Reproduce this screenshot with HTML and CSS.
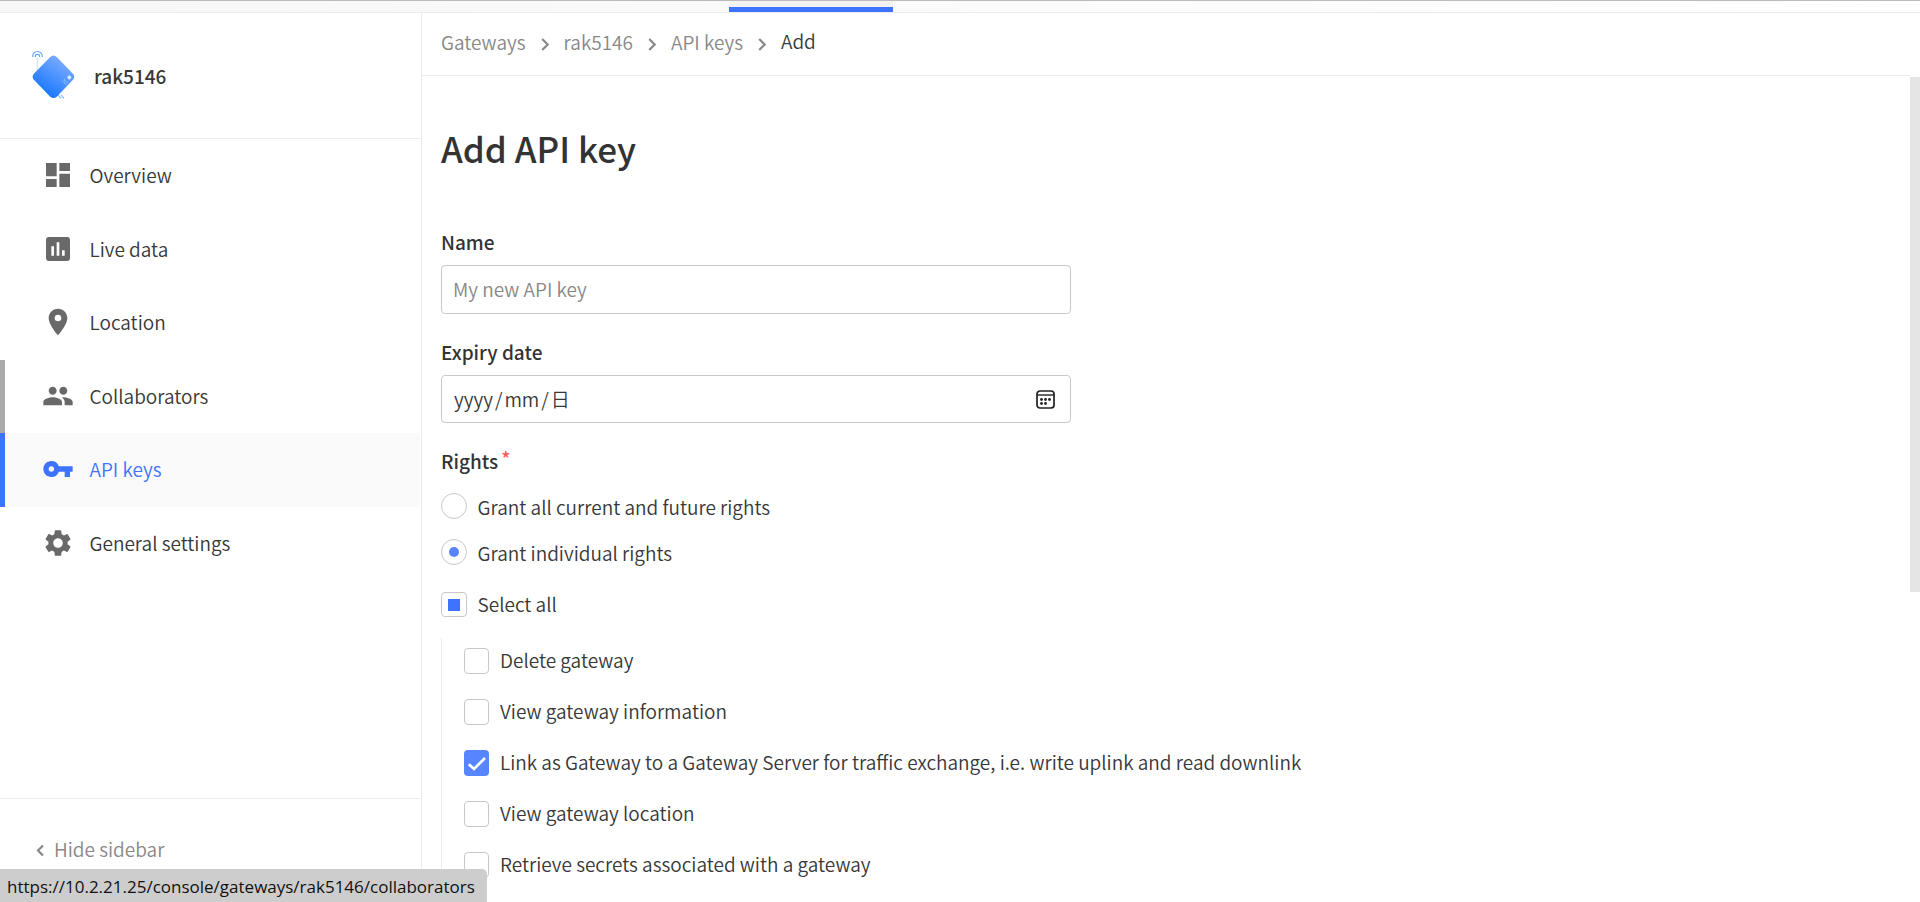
FILE: index.html
```html
<!DOCTYPE html>
<html lang="en">
<head>
<meta charset="utf-8">
<title>Add API key</title>
<link rel="stylesheet" href="styles.css">
</head>
<body>
<div class="page">
  <header class="topbar"><div class="topbar-tab"></div></header>
  <div class="body">
    <aside class="sidebar">
      <div class="entity">
        <svg class="entity-logo" width="44" height="50" viewBox="0 0 44 50">
          <defs><linearGradient id="g" x1="0.25" y1="0.9" x2="0.75" y2="0.1"><stop offset="0" stop-color="#1677ff"/><stop offset="1" stop-color="#7cabff"/></linearGradient></defs>
          <path d="M5.500 8v14" stroke="#d5e8ff" stroke-width="1.600"/>
          <path d="M.7 7V6.300a4.800 4.800 0 0 1 9.600 0V7M3.300 7v-.5a2.200 2.200 0 0 1 4.400 0V7" fill="none" stroke="#5da0f5" stroke-width="1.100"/>
          <path d="M26 45l3 3.500M29 45l3 3.500" stroke="#8fc5ff" stroke-width="1.200"/>
          <path d="M18 7.200q3.500-3.200 7 0L41.200 24q2 2.700 0 5.500L25 46.500q-3.500 3.200-7 0L1.600 29.500q-2-2.700 0-5.500z" fill="url(#g)"/>
          <circle cx="37.300" cy="27.500" r="1.900" fill="#d3ecff"/>
          <path d="M30.500 31l4 3.700M32 29.500l3.500 3.200" stroke="#b9dcff" stroke-width="1" stroke-dasharray="1.300 .7"/>
        </svg>
        <span class="entity-name">rak5146</span>
      </div>
      <nav class="nav">
        <a class="nav-item"><svg class="nav-icon" viewBox="0 0 24 24"><path d="M3 13h8V3H3v10zm0 8h8v-6H3v6zm10 0h8V11h-8v10zm0-18v6h8V3h-8z"/></svg><span>Overview</span></a>
        <a class="nav-item"><svg class="nav-icon" viewBox="0 0 24 24"><path d="M19 3H5c-1.100 0-2 .9-2 2v14c0 1.100.9 2 2 2h14c1.100 0 2-.9 2-2V5c0-1.100-.9-2-2-2zM9 17H7v-7h2v7zm4 0h-2V7h2v10zm4 0h-2v-4h2v4z"/></svg><span>Live data</span></a>
        <a class="nav-item"><svg class="nav-icon" viewBox="0 0 24 24"><path d="M12 2C8.130 2 5 5.130 5 9c0 5.250 7 13 7 13s7-7.750 7-13c0-3.870-3.130-7-7-7zm0 9.500a2.500 2.500 0 0 1 0-5 2.500 2.500 0 0 1 0 5z"/></svg><span>Location</span></a>
        <a class="nav-item nav-hover"><svg class="nav-icon" viewBox="0 0 24 24"><path d="M16 11c1.660 0 2.990-1.340 2.990-3S17.660 5 16 5s-3 1.340-3 3 1.340 3 3 3zm-8 0c1.660 0 2.990-1.340 2.990-3S9.660 5 8 5 5 6.340 5 8s1.340 3 3 3zm0 2c-2.330 0-7 1.170-7 3.500V19h14v-2.500C15 14.170 10.330 13 8 13zm8 0c-.29 0-.62.02-.97.05 1.160.84 1.970 1.970 1.970 3.450V19h6v-2.500c0-2.330-4.670-3.500-7-3.500z"/></svg><span>Collaborators</span></a>
        <a class="nav-item nav-active"><svg class="nav-icon" viewBox="0 0 24 24"><path d="M12.650 10A6 6 0 0 0 7 6c-3.310 0-6 2.690-6 6s2.690 6 6 6a6 6 0 0 0 5.650-4H17v4h4v-4h2v-4H12.650zM7 14a2 2 0 1 1 0-4 2 2 0 0 1 0 4z"/></svg><span>API keys</span></a>
        <a class="nav-item"><svg class="nav-icon" viewBox="0 0 24 24"><path d="M19.140 12.940c.04-.3.060-.61.060-.94 0-.32-.02-.64-.07-.94l2.030-1.580a.49.49 0 0 0 .12-.61l-1.920-3.320a.488.488 0 0 0-.59-.22l-2.390.96c-.5-.38-1.030-.7-1.620-.94l-.36-2.540a.484.484 0 0 0-.48-.41h-3.840c-.24 0-.43.17-.47.41l-.36 2.540c-.59.24-1.130.57-1.620.94l-2.390-.96c-.22-.08-.47 0-.59.22L2.740 8.870c-.12.21-.08.47.12.61l2.030 1.580c-.05.3-.09.63-.09.94s.02.64.07.94l-2.030 1.580a.49.49 0 0 0-.12.61l1.920 3.320c.12.22.37.29.59.22l2.390-.96c.5.38 1.030.7 1.620.94l.36 2.540c.05.24.24.41.48.41h3.840c.24 0 .44-.17.47-.41l.36-2.540c.59-.24 1.130-.56 1.620-.94l2.390.96c.22.08.47 0 .59-.22l1.920-3.320c.12-.22.070-.47-.12-.61l-2.010-1.580zM12 15.600A3.610 3.610 0 0 1 8.400 12c0-1.980 1.620-3.600 3.600-3.600s3.600 1.620 3.600 3.600-1.620 3.600-3.600 3.600z"/></svg><span>General settings</span></a>
      </nav>
      <div class="sidebar-foot">
        <svg width="8" height="13" viewBox="0 0 8 13"><path d="M7 1.500L2 6.500l5 5" fill="none" stroke="#888" stroke-width="2.200"/></svg>
        <span>Hide sidebar</span>
      </div>
    </aside>
    <main class="main">
      <div class="crumbs">
        <span class="crumb">Gateways</span><svg class="sep" viewBox="0 0 9 13"><path d="M1.200 1l5.500 5.500L1.200 12"/></svg>
        <span class="crumb">rak5146</span><svg class="sep" viewBox="0 0 9 13"><path d="M1.200 1l5.500 5.500L1.200 12"/></svg>
        <span class="crumb">API keys</span><svg class="sep" viewBox="0 0 9 13"><path d="M1.200 1l5.500 5.500L1.200 12"/></svg>
        <span class="crumb-last">Add</span>
      </div>
      <div class="content">
        <h1 class="title">Add API key</h1>
        <div class="label">Name</div>
        <div class="input placeholder"><span>My new API key</span></div>
        <div class="label label-date">Expiry date</div>
        <div class="input input-date"><span class="date">yyyy<i>/</i>mm<i>/</i>日</span>
          <svg width="19" height="19" viewBox="0 0 19 19"><rect x="1" y="1" width="17" height="17" rx="3" fill="none" stroke="#222" stroke-width="1.700"/><path d="M1 5h17" stroke="#222" stroke-width="1.400"/><g fill="#222"><circle cx="5.500" cy="9.500" r="1.400"/><circle cx="9.500" cy="9.500" r="1.400"/><circle cx="13.500" cy="9.500" r="1.400"/><circle cx="5.500" cy="13.500" r="1.400"/><circle cx="9.500" cy="13.500" r="1.400"/></g></svg>
        </div>
        <div class="label label-rights"><span>Rights</span><span class="req">*</span></div>
        <div class="radio-row"><span class="radio"></span><span class="text">Grant all current and future rights</span></div>
        <div class="radio-row"><span class="radio radio-on"></span><span class="text">Grant individual rights</span></div>
        <div class="all-row"><span class="box box-some"></span><span class="text">Select all</span></div>
        <div class="rights">
          <div class="right"><span class="box"></span><span class="text">Delete gateway</span></div>
          <div class="right"><span class="box"></span><span class="text">View gateway information</span></div>
          <div class="right"><span class="box box-on"><svg width="25" height="26" viewBox="0 0 25 26"><path d="M4.800 14.200l5.200 4.800L21 8" fill="none" stroke="#fff" stroke-width="2.700"/></svg></span><span class="text">Link as Gateway to a Gateway Server for traffic exchange, i.e. write uplink and read downlink</span></div>
          <div class="right"><span class="box"></span><span class="text">View gateway location</span></div>
          <div class="right"><span class="box"></span><span class="text">Retrieve secrets associated with a gateway</span></div>
        </div>
      </div>
    </main>
    <div class="scroll"><div class="thumb"></div></div>
  </div>
  <div class="status"><span>https://10.2.21.25/console/gateways/rak5146/collaborators</span></div>
</div>
</body>
</html>
```
FILE: styles.css
```css
* { box-sizing: border-box; }
body {
  margin: 0;
  background: #fff;
  color: #383838;
  font: 350 19px/26px "Noto Sans CJK SC", "Noto Sans", sans-serif;
}
.page { position: relative; display: flex; flex-direction: column; height: 902px; overflow: hidden; white-space: nowrap; }
.topbar { height: 13px; flex: none; background: linear-gradient(90deg, #f7f7f7, #fff); border-top: 1px solid #bbb; border-bottom: 1px solid #ebebeb; padding-left: 729px; }
.topbar-tab { width: 164px; height: 11px; background: #f2f2f2; border-bottom: 5px solid #3d73ff; }
.body { display: flex; flex: 1; min-height: 0; }

.sidebar { width: 422px; flex: none; display: flex; flex-direction: column; border-right: 1px solid #ebebeb; padding-right: 1px; }
.entity { height: 126px; flex: none; border-bottom: 1px solid #ebebeb; display: flex; align-items: flex-start; padding: 37px 0 0 32px; }
.entity-name { margin: 13px 0 0 18px; font-weight: 500; }
.nav { flex: 1; }
.nav-item { height: 73.5px; display: flex; align-items: center; padding: 0 0 1px 37px; border-left: 5px solid transparent; }
.nav-icon { width: 32px; height: 32px; margin-right: 15.5px; fill: #696969; }
.nav-hover { border-left-color: #aaa; }
.nav-active { border-left-color: #3d73ff; background: #fafafa; color: #3d73ff; }
.nav-active .nav-icon { fill: #3d73ff; }
.sidebar-foot { height: 104px; flex: none; border-top: 1px solid #ebebeb; color: #888; display: flex; align-items: center; gap: 10px; padding: 0 0 3px 36px; }
.sidebar-foot svg { margin-top: 2px; }

.main { flex: 1; min-width: 0; display: flex; flex-direction: column; }
.crumbs { height: 63px; flex: none; border-bottom: 1px solid #ebebeb; display: flex; align-items: center; padding: 0 0 4px 19px; color: #888; }
.crumb-last { color: #383838; margin-bottom: 2px; }
.sep { width: 9px; height: 13px; margin: 4px 14px 0 15px; fill: none; stroke: #888; stroke-width: 2.2; }
.content { padding: 49px 0 0 19px; }
.title { margin: 0; font-size: 35px; line-height: 46px; font-weight: 500; color: #333; }
.label { margin-top: 58px; font-weight: 500; height: 26px; margin-bottom: 10px; color: #333; }
.label-date { margin-top: 25px; }
.input { width: 630px; height: 49px; border: 1px solid #c8c8c8; border-radius: 4px; display: flex; align-items: center; justify-content: space-between; padding: 0 15px 2px 11px; }
.input-date { height: 48px; padding: 0 15px 0 12px; }
.placeholder { color: #888; }
.label-rights { display: flex; margin: 25px 0 19px; }
.req { color: #ff5a5a; margin: -3px 0 0 3px; }
.date i { font-style: normal; padding: 0 2px; }
.radio-row { height: 46px; display: flex; align-items: flex-start; }
.radio { width: 26px; height: 26px; border: 1px solid #c8c8c8; border-radius: 50%; display: flex; align-items: center; justify-content: center; }
.radio-on::after { content: ""; width: 10px; height: 10px; border-radius: 50%; background: #5785ff; }
.text { margin: -1px 0 0 10.5px; }
.radio-row .text { margin-top: 1px; }
.all-row { display: flex; height: 26px; margin-top: 7px; }
.box { width: 25px; height: 26px; border: 1px solid #c8c8c8; border-radius: 4px; display: flex; align-items: center; justify-content: center; flex: none; }
.box-some { width: 26px; height: 25px; }
.box-some::after { content: ""; width: 12px; height: 12px; background: #3d73ff; }
.box-on { background: #5785ff; border: 0; }
.rights { margin-top: 20px; border-left: 1px solid #ebebeb; padding: 10px 0 100px 22px; }
.right { height: 51px; display: flex; align-items: flex-start; }
.right .text { margin-left: 11px; }

.scroll { width: 10px; flex: none; padding-top: 64px; }
.thumb { height: 515px; background: #e5e5e5; }
.status { position: absolute; left: 0; bottom: 0; width: 487px; height: 33px; border-radius: 0 5px 0 0; background: #cdcdcd; color: #111; font: 17px/35px "Open Sans", "Noto Sans", sans-serif; padding-left: 7px; }
```
